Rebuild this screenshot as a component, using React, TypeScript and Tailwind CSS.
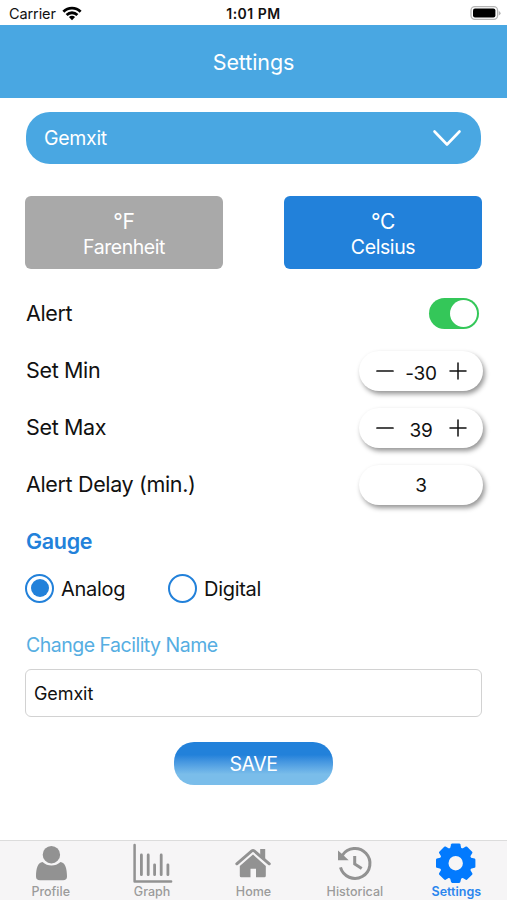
import React from 'react';

const GRAY = '#929292';

function WifiIcon() {
  return (
    <svg className="ml-[6px] h-[15px] w-[20px]" viewBox="0 0 20 15" fill="none" stroke="#000" strokeWidth="2.8">
      <path d="M1.4 5.8C6.2 .9 13.8 .9 18.6 5.8" />
      <path d="M4.6 9C7.7 6 12.3 6 15.4 9" />
      <path d="M10 14.2L6.9 11.1C8.6 9.4 11.4 9.4 13.1 11.1Z" fill="#000" stroke="none" />
    </svg>
  );
}

function BatteryIcon() {
  return (
    <svg className="h-[15px] w-[31px]" viewBox="470 6 31 15">
      <rect x="471" y="6.7" width="26.6" height="12.6" rx="3.8" fill="#fff" stroke="#b5b5b5" strokeWidth="1.3" />
      <rect x="473" y="8.6" width="22.4" height="8.9" rx="2" fill="#000" />
      <path d="M498.8 11v4.4q1.8-.7 1.8-2.2t-1.8-2.2z" fill="#b5b5b5" />
    </svg>
  );
}

function ProfileIcon() {
  return (
    <svg className="h-[42px] w-[44px]" viewBox="29 842 44 42">
      <path d="M42.5 862C38 862.6 36 868 36 876.500Q36 880.300 40 880.300H63Q67 880.300 67 876.500C67 868 65 862.600 60.500 862Q56.500 865.600 51.500 865.600T42.500 862Z" fill={GRAY} />
      <circle cx="51.4" cy="854.7" r="8.7" fill={GRAY} />
    </svg>
  );
}

function GraphIcon() {
  return (
    <svg className="h-[42px] w-[44px]" viewBox="130.100 842 44 42" fill="none" stroke={GRAY} strokeLinecap="round">
      <path d="M134.700 845V881.400H171.200" strokeWidth="2.500" strokeLinejoin="round" />
      <path d="M141.500 855V874.700M148.300 855V874.700M154.700 864.800V874.700M161.300 855V874.700M168 864.800V874.700" strokeWidth="2.800" />
    </svg>
  );
}

function HomeIcon() {
  return (
    <svg className="h-[42px] w-[44px]" viewBox="231.500 842 44 42" fill={GRAY}>
      <path d="M253.500 854.500L240.300 866V875.800Q240.300 877.300 241.800 877.300H251V868.700H256.500V877.300H264.800Q266.300 877.300 266.300 875.800V866Z" />
      <path d="M260.700 849H265.700V860L260.700 856Z" />
      <path d="M237.300 863.800L252.300 850.900Q253.500 850 254.700 850.900L269.800 863.800" fill="none" stroke={GRAY} strokeWidth="2.900" strokeLinecap="round" />
    </svg>
  );
}

function HistoryIcon() {
  return (
    <svg className="h-[42px] w-[44px]" viewBox="333 842 44 42" fill="none" stroke={GRAY} strokeWidth="3">
      <path d="M342.400 855.200A15 15 0 1 1 340.500 867.400" />
      <path d="M354.700 856V864L361.700 868.600" />
      <path d="M338 850.500V860.300H348.700L345.500 857.200L343.500 855.200Z" fill={GRAY} stroke="none" />
    </svg>
  );
}

function GearIcon() {
  return (
    <svg className="h-[42px] w-[44px]" viewBox="434.300 842 44 42" fill="#027afe">
      {[0, 45, 90, 135, 180, 225, 270, 315].map((a) => (
        <path
          key={a}
          d="M450 850L451.400 844.300Q451.600 843.500 452.500 843.500H459.500Q460.400 843.500 460.600 844.300L462 850Z"
          transform={`rotate(${a} 456 863.200)`}
        />
      ))}
      <circle cx="456" cy="863.200" r="11.700" fill="none" stroke="#027afe" strokeWidth="9" />
    </svg>
  );
}

const tabs = [
  { label: 'Profile', Icon: ProfileIcon },
  { label: 'Graph', Icon: GraphIcon },
  { label: 'Home', Icon: HomeIcon },
  { label: 'Historical', Icon: HistoryIcon },
  { label: 'Settings', Icon: GearIcon, active: true },
];

function Row({ label, children }: { label: string; children: React.ReactNode }) {
  return (
    <div className="flex h-[57px] items-center justify-between">
      <span className="text-[21.500px] tracking-[-0.350px]">{label}</span>
      {children}
    </div>
  );
}

function Pill({ value, stepper }: { value: string; stepper?: boolean }) {
  return (
    <div className="-mr-px grid h-10 w-[124px] grid-cols-[50px_24px_50px] items-center rounded-full bg-white shadow-[2px_3px_5px_rgba(0,0,0,0.42)]">
      {stepper ? (
        <svg className="ml-[17px] size-[18px]" viewBox="0 0 18 18" stroke="#111" strokeWidth="1.700" strokeLinecap="round">
          <path d="M1 9H17" />
        </svg>
      ) : (
        <span />
      )}
      <span className={stepper ? 'flex justify-center pt-[7px] text-[19px] tracking-[-0.300px]' : 'flex justify-center pt-[3px] text-[19px]'}>
        {value}
      </span>
      {stepper && (
        <svg className="ml-[16px] size-[18px]" viewBox="0 0 18 18" stroke="#111" strokeWidth="1.500" strokeLinecap="round">
          <path d="M1 9H17M9 1V17" />
        </svg>
      )}
    </div>
  );
}

export default function App() {
  return (
    <div className="flex h-[900px] w-[507px] flex-col overflow-hidden bg-white font-['Inter','Liberation_Sans',sans-serif] text-[#111]">
      <div className="grid h-[25px] grid-cols-3 items-center pt-[2px]">
        <div className="flex items-center pl-[9px] text-[14.500px] tracking-[-0.100px]">
          Carrier
          <WifiIcon />
        </div>
        <span className="text-center text-[14px] font-semibold tracking-[0.500px]">1:01 PM</span>
        <div className="flex justify-end pr-[6px]">
          <BatteryIcon />
        </div>
      </div>
      <header className="flex h-[73px] items-center justify-center bg-[#49a7e2] pt-[2px] text-[21.500px] tracking-[-0.100px] text-white">Settings</header>

      <main className="flex flex-1 flex-col px-[25px] pt-[14px]">
        <div className="mx-px flex h-[52px] items-center justify-between rounded-[24px] bg-[#49a7e2] pr-[19px] pl-[18px] text-[19.500px] tracking-[-0.300px] text-white">
          <span className="pt-[2px]">Gemxit</span>
          <svg className="h-[18px] w-[30px]" viewBox="0 0 30 18" fill="none" stroke="#fff" strokeWidth="2.600" strokeLinecap="round" strokeLinejoin="round">
            <path d="M2.500 2.500L15 15.500L27.500 2.500" />
          </svg>
        </div>

        <div className="mt-[32px] flex h-[73px] justify-between text-white">
          <div className="flex w-[198px] flex-col items-center justify-center rounded-md bg-[#a9a9a9] pt-[2px]">
            <span className="text-[21px] leading-[26px] tracking-[-0.300px]">°F</span>
            <span className="text-[19.500px] leading-[24px] tracking-[-0.450px]">Farenheit</span>
          </div>
          <div className="flex w-[198px] flex-col items-center justify-center rounded-md bg-[#2281da] pt-[2px]">
            <span className="text-[21px] leading-[26px] tracking-[-0.300px]">°C</span>
            <span className="text-[19.500px] leading-[24px] tracking-[-0.400px]">Celsius</span>
          </div>
        </div>

        <div className="mt-[16px] pl-px">
          <Row label="Alert">
            <div className="mr-[3px] flex h-[31px] w-[50px] items-center justify-end rounded-full bg-[#34c759] pr-[2px]">
              <div className="size-[27px] rounded-full bg-white" />
            </div>
          </Row>
          <Row label="Set Min">
            <Pill value="-30" stepper />
          </Row>
          <Row label="Set Max">
            <Pill value="39" stepper />
          </Row>
          <Row label="Alert Delay (min.)">
            <Pill value="3" />
          </Row>
        </div>

        <h2 className="mt-[13px] pl-px text-[21.500px] leading-[30px] font-semibold tracking-[-0.300px] text-[#2281da]">Gauge</h2>

        <div className="mt-[17px] flex h-[30px] items-center text-[20px] tracking-[-0.300px]">
          <div className="flex w-[143px] items-center gap-[7px]">
            <div className="flex size-[29px] items-center justify-center rounded-full border-2 border-[#2281da]">
              <div className="size-[18px] rounded-full bg-[#2281da]" />
            </div>
            <span className="pt-px">Analog</span>
          </div>
          <div className="flex items-center gap-[7px]">
            <div className="size-[29px] rounded-full border-2 border-[#2281da]" />
            <span className="pt-px">Digital</span>
          </div>
        </div>

        <div className="mt-[27px] pl-px text-[19.500px] leading-[30px] tracking-[-0.500px] text-[#56aee2]">Change Facility Name</div>
        <div className="mt-[9px] flex h-[48px] items-center rounded-md border border-[#d2d2d2] pt-px pl-[8px] text-[18px] tracking-[-0.100px]">
          Gemxit
        </div>

        <button className="mt-[25px] flex h-[43px] w-[159px] items-center justify-center self-center rounded-[20px] bg-linear-to-b from-[#2281da] from-30% to-[#7abdea] to-75% pt-[2px] text-[19.500px] tracking-[-0.500px] text-white">
          SAVE
        </button>
      </main>

      <nav className="grid h-[60px] shrink-0 grid-cols-5 border-t border-[#dcdcdc] bg-[#f6f5f6]">
        {tabs.map(({ label, Icon, active }) => (
          <div key={label} className="flex flex-col items-center pt-px">
            <Icon />
            <span
              className={
                active
                  ? 'pt-px text-[12.500px] leading-[14px] font-semibold text-[#2b86ee]'
                  : 'pt-px text-[12.500px] leading-[14px] font-medium text-[#9b9b9b]'
              }
            >
              {label}
            </span>
          </div>
        ))}
      </nav>
    </div>
  );
}
